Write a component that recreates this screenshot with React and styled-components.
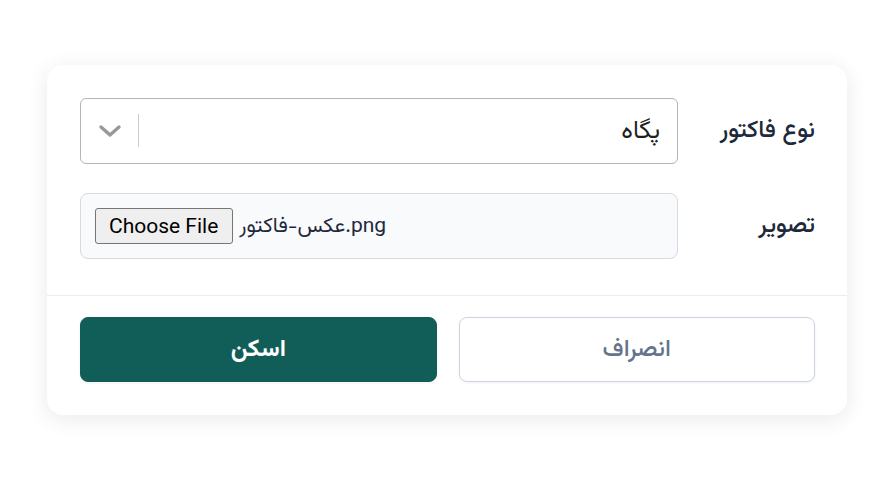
import React from 'react';
import styled, { createGlobalStyle } from 'styled-components';

const GlobalStyle = createGlobalStyle`
  html, body {
    margin: 0;
    padding: 0;
    background: #ffffff;
  }
  body {
    font-family: "Vazirmatn", "Noto Sans Arabic", "Noto Sans", "DejaVu Sans", sans-serif;
  }
`

const Page = styled.div`
  min-height: 100vh;
  display: flex;
  align-items: center;
  justify-content: center;
`

const Card = styled.div`
  direction: rtl;
  width: 800px;
  background: #fff;
  border-radius: 16px;
  box-shadow: 0 4px 22px rgba(15, 23, 42, 0.09);
  box-sizing: border-box;
`

const Form = styled.div`
  display: flex;
  flex-direction: column;
  gap: 29px;
  padding: 33px 32px 36px 33px;
  border-bottom: 1px solid #e8edf3;
`

const Row = styled.div`
  display: grid;
  grid-template-columns: 120px 1fr;
  column-gap: 17px;
  align-items: center;
`

const Label = styled.label`
  font-size: 24px;
  color: #1e293b;
  font-weight: 500;
`

const SelectBox = styled.div`
  height: 66px;
  box-sizing: border-box;
  border: 1px solid #b5b5b5;
  border-radius: 6px;
  display: flex;
  align-items: center;
  background: #fff;
`

const SelectValue = styled.div`
  flex: 1;
  padding-right: 17px;
  font-size: 25px;
  color: #1f1f1f;
`

const Separator = styled.span`
  width: 1px;
  align-self: stretch;
  margin: 15px 0 16px;
  background: #cccccc;
`

const Indicator = styled.span`
  width: 57px;
  display: flex;
  align-items: center;
  justify-content: center;
  color: #999999;
`

const FileBox = styled.div`
  direction: ltr;
  height: 66px;
  box-sizing: border-box;
  border: 1px solid #d6dbe2;
  border-radius: 8px;
  background: #f8fafc;
  display: flex;
  align-items: center;
  padding-left: 14px;
  gap: 6px;
`

const FileButton = styled.span`
  display: inline-flex;
  align-items: center;
  height: 36px;
  padding: 0 14px 0 13px;
  box-sizing: border-box;
  border: 1px solid #767676;
  border-radius: 3px;
  background: #efefef;
  font-family: "Roboto", "Liberation Sans", Arial, sans-serif;
  font-size: 21px;
  color: #000;
`

const FileName = styled.span`
  font-size: 21px;
  color: #1e293b;
`

const Footer = styled.div`
  display: grid;
  grid-template-columns: 1fr 1fr;
  gap: 22px;
  padding: 21px 32px 33px 33px;
`

const Button = styled.button`
  height: 65px;
  border-radius: 8px;
  font-family: inherit;
  font-size: 24px;
  cursor: pointer;
  border: 1px solid ${p => (p.primary ? '#115e59' : '#cbd5e1')};
  background: ${p => (p.primary ? '#115e59' : '#ffffff')};
  color: ${p => (p.primary ? '#ffffff' : '#64748b')};
  font-weight: ${p => (p.primary ? 700 : 500)};
  box-shadow: 0 1px 3px rgba(15, 23, 42, 0.06);
`

const Chevron = () => (
  <svg width="24" height="14" viewBox="0 0 24 14" aria-hidden="true">
    <polyline
      points="3,3 12,11 21,3"
      fill="none"
      stroke="currentColor"
      strokeWidth="3.4"
      strokeLinecap="round"
      strokeLinejoin="round"
    />
  </svg>
)

export default function App() {
  return (
    <Page>
      <GlobalStyle />
      <Card>
        <Form>
          <Row>
            <Label>نوع فاکتور</Label>
            <SelectBox>
              <SelectValue>پگاه</SelectValue>
              <Separator />
              <Indicator><Chevron /></Indicator>
            </SelectBox>
          </Row>
          <Row>
            <Label>تصویر</Label>
            <FileBox>
              <FileButton>Choose File</FileButton>
              <FileName>عکس-فاکتور.png</FileName>
            </FileBox>
          </Row>
        </Form>
        <Footer>
          <Button>انصراف</Button>
          <Button primary>اسکن</Button>
        </Footer>
      </Card>
    </Page>
  );
}
